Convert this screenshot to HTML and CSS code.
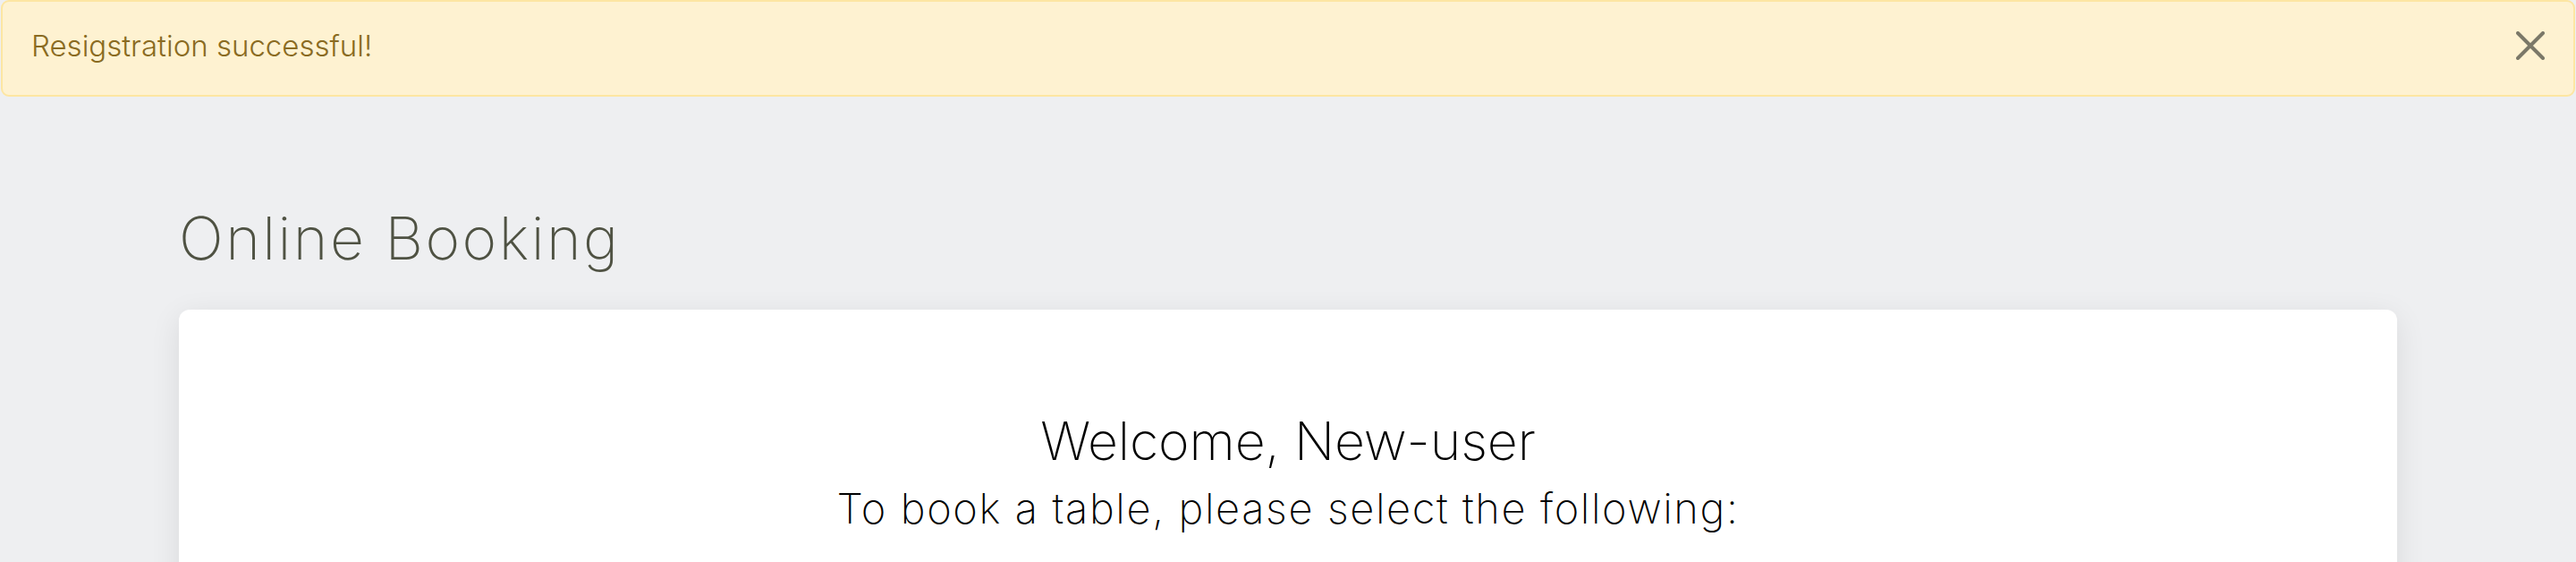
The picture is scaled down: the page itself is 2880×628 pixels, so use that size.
FILE: index.html
```html
<!DOCTYPE html>
<html lang="en">
<head>
<meta charset="utf-8">
<title>Online Booking</title>
<link rel="stylesheet" href="styles.css">
</head>
<body>
  <div class="alert" role="alert">
    <span class="alert-text">Resigstration successful!</span>
    <button class="alert-close" type="button" aria-label="Close">
      <svg width="32" height="32" viewBox="0 0 32 32" aria-hidden="true">
        <path d="M2 2 L30 30 M30 2 L2 30" stroke="currentColor" stroke-width="4" stroke-linecap="round" fill="none"/>
      </svg>
    </button>
  </div>
  <main class="container">
    <h1 class="page-title">Online Booking</h1>
    <section class="card">
      <h2 class="welcome">Welcome, New-user</h2>
      <p class="instructions">To book a table, please select the following:</p>
    </section>
  </main>
</body>
</html>
```
FILE: styles.css
```css
html, body {
  margin: 0;
  padding: 0;
}
body {
  background: #eeeff1;
  font-family: Inter, "Open Sans", sans-serif;
  font-weight: 300;
  overflow: hidden;
}
.alert {
  display: flex;
  align-items: flex-start;
  justify-content: space-between;
  box-sizing: border-box;
  height: 108px;
  margin: 0 1px;
  padding: 25px 32px 0 32px;
  background: #fef2d1;
  border: 2px solid #fde6a2;
  border-radius: 9px;
}
.alert-text {
  font-size: 33px;
  line-height: 48px;
  color: #8a6b22;
  letter-spacing: 0;
}
.alert-close {
  display: flex;
  padding: 0;
  margin-top: 8px;
  border: 0;
  background: none;
  color: #7b7868;
  cursor: pointer;
}
.container {
  width: 2480px;
  margin: 0 auto;
}
.page-title {
  margin: 119px 0 41px;
  font-size: 66px;
  line-height: 78px;
  font-weight: 200;
  color: #4f5243;
  letter-spacing: 2.45px;
}
.card {
  background: #fff;
  border-radius: 12px;
  box-shadow: 0 8px 34px rgba(0, 0, 0, 0.09);
  padding: 111px 40px 200px;
  text-align: center;
  color: #000;
  font-weight: 200;
}
.welcome {
  margin: 0;
  font-size: 59px;
  line-height: 72px;
  font-weight: 200;
  letter-spacing: -0.15px;
}
.instructions {
  margin: 11px 0 0;
  font-size: 47px;
  line-height: 56px;
  letter-spacing: 1.6px;
}
```
